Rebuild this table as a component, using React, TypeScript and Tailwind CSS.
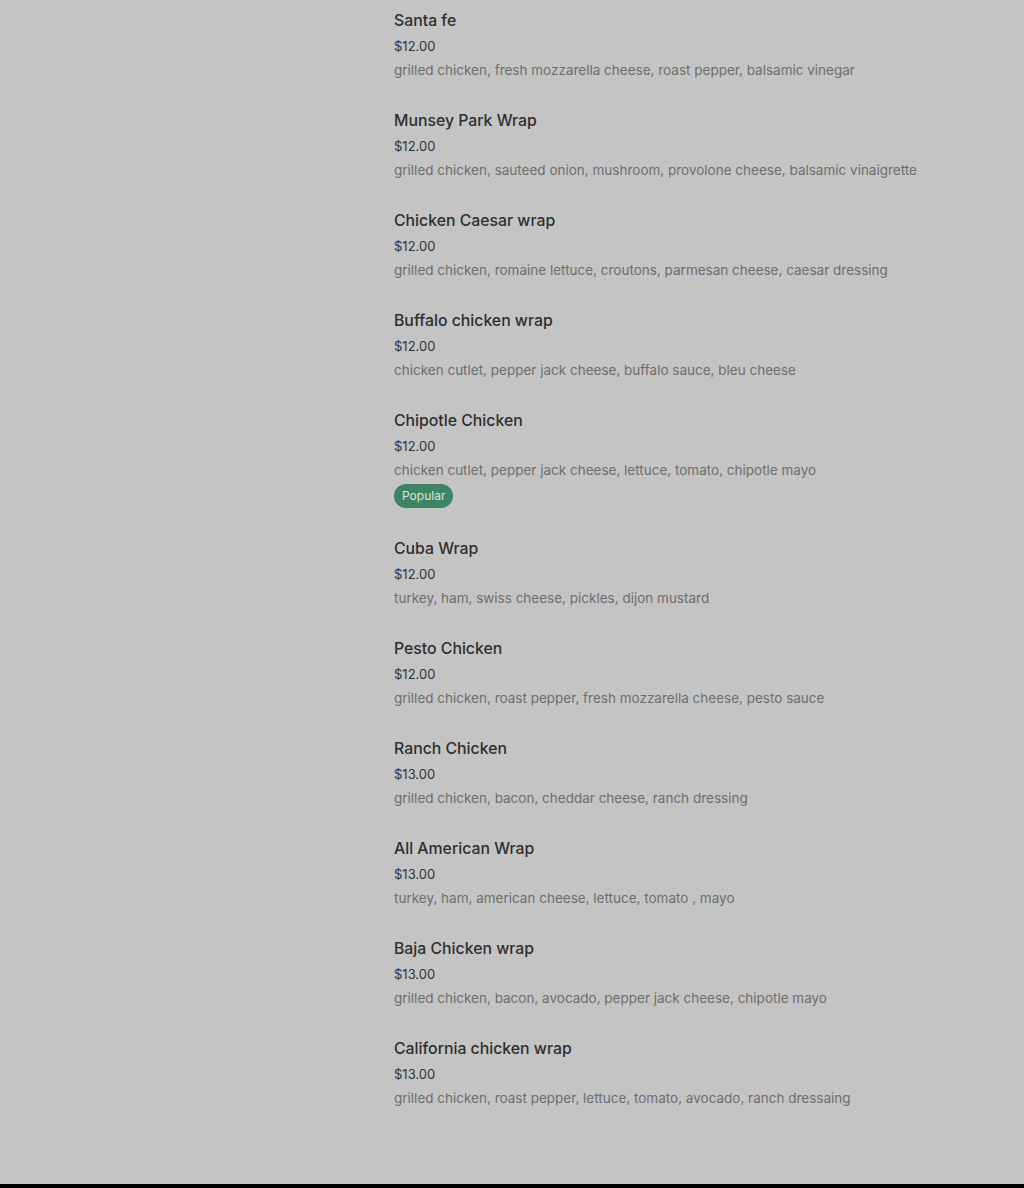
const items = [
  { name: "Santa fe", price: "$12.00", desc: "grilled chicken, fresh mozzarella cheese, roast pepper, balsamic vinegar" },
  { name: "Munsey Park Wrap", price: "$12.00", desc: "grilled chicken, sauteed onion, mushroom, provolone cheese, balsamic vinaigrette" },
  { name: "Chicken Caesar wrap", price: "$12.00", desc: "grilled chicken, romaine lettuce, croutons, parmesan cheese, caesar dressing" },
  { name: "Buffalo chicken wrap", price: "$12.00", desc: "chicken cutlet, pepper jack cheese, buffalo sauce, bleu cheese" },
  { name: "Chipotle Chicken", price: "$12.00", desc: "chicken cutlet, pepper jack cheese, lettuce, tomato, chipotle mayo", popular: true },
  { name: "Cuba Wrap", price: "$12.00", desc: "turkey, ham, swiss cheese, pickles, dijon mustard" },
  { name: "Pesto Chicken", price: "$12.00", desc: "grilled chicken, roast pepper, fresh mozzarella cheese, pesto sauce" },
  { name: "Ranch Chicken", price: "$13.00", desc: "grilled chicken, bacon, cheddar cheese, ranch dressing" },
  { name: "All American Wrap", price: "$13.00", desc: "turkey, ham, american cheese, lettuce, tomato , mayo" },
  { name: "Baja Chicken wrap", price: "$13.00", desc: "grilled chicken, bacon, avocado, pepper jack cheese, chipotle mayo" },
  { name: "California chicken wrap", price: "$13.00", desc: "grilled chicken, roast pepper, lettuce, tomato, avocado, ranch dressaing" },
];

export default function App() {
  return (
    <div className="min-h-[1188px] bg-[#c4c4c4] flex flex-col font-['Inter',sans-serif]">
      <div className="flex-1 pl-[394px] pt-2 flex flex-col gap-7">
        {items.map((it) => (
          <div key={it.name} className="flex flex-col">
            <h3 className="text-[15.8px] leading-6 pt-px font-medium text-[#2e2e2e]">{it.name}</h3>
            <p className="text-[13px] leading-5 mt-[3px] text-[#333333]">{it.price}</p>
            <p className="text-[13.5px] leading-5 mt-1 text-[#6e6e6e]">{it.desc}</p>
            {it.popular && (
              <span className="mt-1 self-start bg-[#3f8563] text-[#d6e6dc] text-[12px] leading-6 px-2 rounded-full">
                Popular
              </span>
            )}
          </div>
        ))}
      </div>
      <div className="h-1 bg-black" />
    </div>
  );
}
